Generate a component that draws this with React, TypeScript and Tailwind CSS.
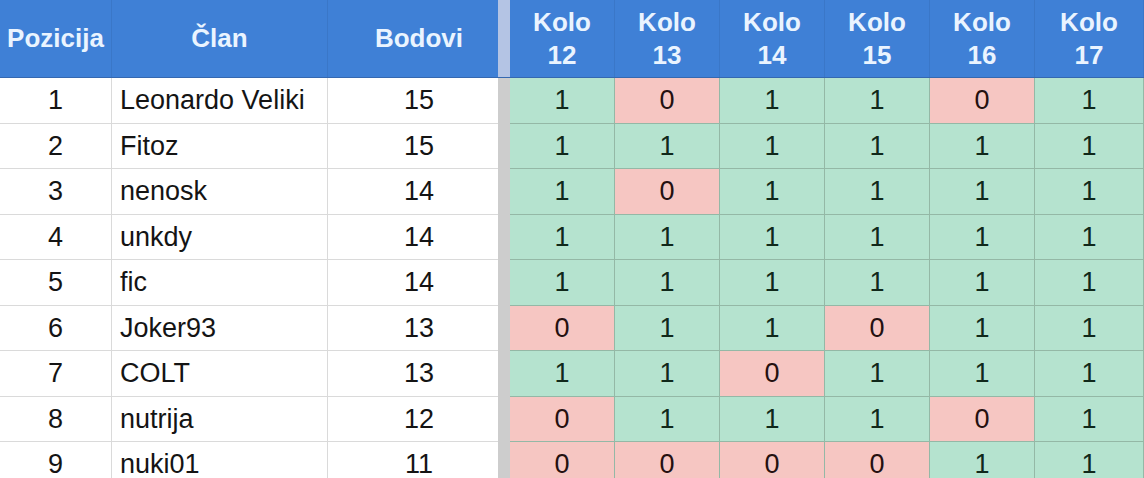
import React from "react";

const rows: [number, string, number, number[]][] = [
  [1, "Leonardo Veliki", 15, [1, 0, 1, 1, 0, 1]],
  [2, "Fitoz", 15, [1, 1, 1, 1, 1, 1]],
  [3, "nenosk", 14, [1, 0, 1, 1, 1, 1]],
  [4, "unkdy", 14, [1, 1, 1, 1, 1, 1]],
  [5, "fic", 14, [1, 1, 1, 1, 1, 1]],
  [6, "Joker93", 13, [0, 1, 1, 0, 1, 1]],
  [7, "COLT", 13, [1, 1, 0, 1, 1, 1]],
  [8, "nutrija", 12, [0, 1, 1, 1, 0, 1]],
  [9, "nuki01", 11, [0, 0, 0, 0, 1, 1]],
];

const kola = [12, 13, 14, 15, 16, 17];

const gridCols = "grid grid-cols-[112px_216px_170px_12px_105px_105px_105px_105px_105px_109px]";

export default function App() {
  return (
    <div
      className="w-[1144px] h-[478px] overflow-hidden bg-white"
      style={{ fontFamily: '"Liberation Sans", Arial, sans-serif' }}
    >
      <div className={`${gridCols} h-[78px] bg-[#3f80d6] text-[#eaf4ff] font-bold text-[26px] border-b border-[#3568b0]`}>
        <div className="flex items-center justify-center border-r border-[#3a77c8]">Pozicija</div>
        <div className="flex items-center justify-center border-r border-[#3a77c8]">Član</div>
        <div className="flex items-center justify-center pl-[12px]">Bodovi</div>
        <div className="bg-[#b4c4e4]" />
        {kola.map((k) => (
          <div
            key={k}
            className="flex flex-col items-center justify-center leading-[33px] border-r border-[#3a77c8]"
          >
            <span>Kolo</span>
            <span>{k}</span>
          </div>
        ))}
      </div>
      {rows.map(([pos, name, pts, vals]) => (
        <div key={pos} className={`${gridCols} h-[45.5px] text-[27px] text-[#141414]`}>
          <div className="flex items-center justify-center border-r border-b border-[#dadada]">{pos}</div>
          <div className="flex items-center pl-[8px] border-r border-b border-[#dadada]">{name}</div>
          <div className="flex items-center justify-center pl-[12px] border-b border-[#dadada]">{pts}</div>
          <div className="bg-[#cdcdcd]" />
          {vals.map((v, i) => (
            <div
              key={i}
              className={`flex items-center justify-center border-r border-b border-[#94b8a6] ${
                v === 1 ? "bg-[#b5e3cf] text-[#10281a]" : "bg-[#f6c6c2] text-[#241010]"
              }`}
            >
              {v}
            </div>
          ))}
        </div>
      ))}
    </div>
  );
}
